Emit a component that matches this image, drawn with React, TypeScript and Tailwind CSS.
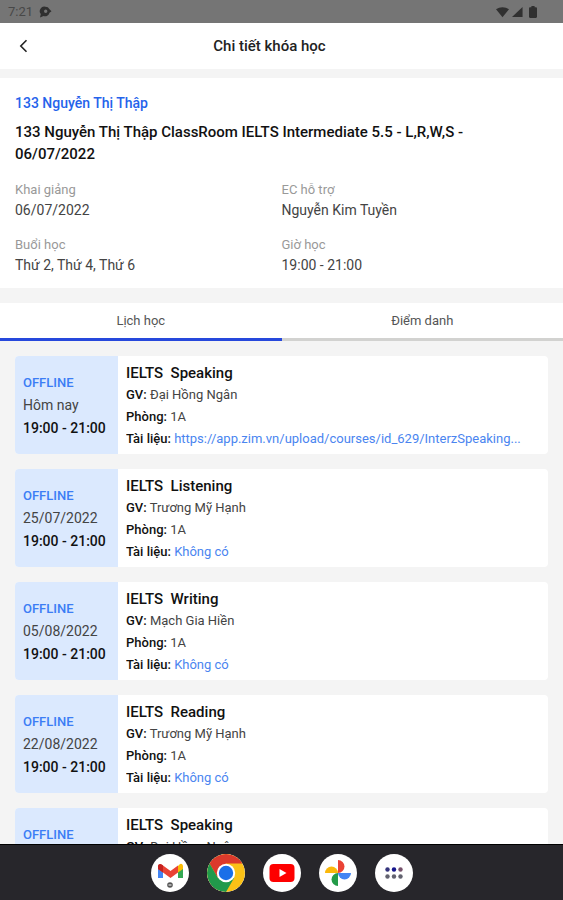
type Lesson = {
  skill: string;
  date: string;
  teacher: string;
  room: string;
  material?: string;
};

const lessons: Lesson[] = [
  {
    skill: "Speaking",
    date: "Hôm nay",
    teacher: "Đại Hồng Ngân",
    room: "1A",
    material: "https://app.zim.vn/upload/courses/id_629/InterzSpeaking...",
  },
  { skill: "Listening", date: "25/07/2022", teacher: "Trương Mỹ Hạnh", room: "1A" },
  { skill: "Writing", date: "05/08/2022", teacher: "Mạch Gia Hiền", room: "1A" },
  { skill: "Reading", date: "22/08/2022", teacher: "Trương Mỹ Hạnh", room: "1A" },
  { skill: "Speaking", date: "24/08/2022", teacher: "Đại Hồng Ngân", room: "1A" },
];

const facts = [
  ["Khai giảng", "06/07/2022"],
  ["EC hỗ trợ", "Nguyễn Kim Tuyền"],
  ["Buổi học", "Thứ 2, Thứ 4, Thứ 6"],
  ["Giờ học", "19:00 - 21:00"],
];

function StatusBar() {
  return (
    <div className="flex h-[23px] shrink-0 items-center justify-between bg-[#757575] pr-[26px] pl-2 text-[#303030]">
      <div className="flex items-center gap-[6px]">
        <span className="text-[13px] leading-5 text-[#484848]">7:21</span>
        <svg className="h-3 w-[13px]" viewBox="0 0 13 12" fill="currentColor" aria-hidden="true">
          <path
            fillRule="evenodd"
            d="M6.500 .8a4.500 4.500 0 0 1 4 2.400L12.500 5.200l-2 1.500a4.500 4.500 0 0 1-6 3.300L1 11.500l.8-3.500A4.500 4.500 0 0 1 6.500 .8zM6.700 3.600a1.700 1.700 0 1 0 0 3.400 1.700 1.700 0 0 0 0-3.400z"
          />
        </svg>
      </div>
      <div className="flex items-center gap-[3px]">
        <svg className="h-3 w-[13px]" viewBox="0 0 14 12" fill="currentColor" aria-hidden="true">
          <path d="M0 3C4 .1 10 .1 14 3L7 11.6z" />
        </svg>
        <svg className="h-3 w-[11px]" viewBox="0 0 12 12" fill="currentColor" aria-hidden="true">
          <path d="M11.5 .5v11H0z" />
        </svg>
        <svg className="ml-[3px] h-3 w-2" viewBox="0 0 8 12" fill="currentColor" aria-hidden="true">
          <path d="M2.4 0h3.2v1.3h1.2c.7 0 1.2.5 1.2 1.2v8.300c0 .7-.5 1.200-1.200 1.200H1.200C.5 12 0 11.500 0 10.800V2.500c0-.7.5-1.200 1.200-1.200h1.200z" />
        </svg>
      </div>
    </div>
  );
}

function LessonCard({ lesson }: { lesson: Lesson }) {
  return (
    <li className="flex overflow-hidden rounded bg-white">
      <div className="flex w-[103px] shrink-0 flex-col justify-center bg-[#dbe9fe] pl-2 text-[14px] leading-[23px]">
        <p className="text-[13px] leading-[23px] font-medium text-[#3b7df5]">OFFLINE</p>
        <p className="text-[#444444]">{lesson.date}</p>
        <p className="font-medium text-[#111111]">19:00 - 21:00</p>
      </div>
      <div className="min-w-0 flex-1 pt-[6px] pr-3 pb-1 pl-2 text-[13px] leading-[22px] text-[#444444]">
        <h2 className="text-[15px] leading-[22px] font-medium whitespace-pre text-[#111111]">
          {"IELTS  " + lesson.skill}
        </h2>
        <p>
          <span className="font-medium text-[#111111]">GV:</span> {lesson.teacher}
        </p>
        <p>
          <span className="font-medium text-[#111111]">Phòng:</span> {lesson.room}
        </p>
        <p className="truncate">
          <span className="font-medium text-[#111111]">Tài liệu:</span>{" "}
          {lesson.material ? (
            <a href="#material" className="text-[#4a85f0]">
              {lesson.material}
            </a>
          ) : (
            <span className="text-[#4a85f0]">Không có</span>
          )}
        </p>
      </div>
    </li>
  );
}

const appButton = "flex size-[38px] items-center justify-center overflow-hidden rounded-full bg-white";

function Dock() {
  return (
    <nav className="flex h-14 shrink-0 items-center justify-center gap-[18px] border-t border-black bg-[#27262b]">
      <button type="button" aria-label="Gmail" className={appButton}>
        <svg className="size-[38px]" viewBox="0 0 38 38" aria-hidden="true">
          <path d="M7 13v11h5V15z" fill="#4285f4" />
          <path d="M27 15v9h5V13z" fill="#34a853" />
          <path d="M27 12v6.500L32 15v-2.500c0-2.500-2-3.500-3.500-2z" fill="#fbbc04" />
          <path d="M7 13c0-3 2.300-3.500 4-2.200l8.500 6.200L27 11.400V18.500l-7.500 5.500L12 18.500 7 15z" fill="#ea4335" />
          <path d="M7 12.500V15l5 3.500V11.600L11 10.800C9.300 9.500 7 10 7 12.500z" fill="#c5221f" />
          <circle cx="19" cy="31" r="2.800" fill="#555" />
          <path d="M17.500 30h3v2h-3z" fill="#aaa" />
        </svg>
      </button>
      <button type="button" aria-label="Chrome" className={appButton}>
        <svg className="size-[38px]" viewBox="0 0 38 38" aria-hidden="true">
          <circle cx="19" cy="19" r="19" fill="#fbc116" />
          <path d="M2.550 9.500A19 19 0 0 1 35.450 9.500H19L10.800 23.700z" fill="#dc3a2c" />
          <path d="M2.550 9.500A19 19 0 0 0 19 38L27.200 23.700H10.800z" fill="#219a4b" />
          <circle cx="19" cy="19" r="9.200" fill="#fff" />
          <circle cx="19" cy="19" r="7.200" fill="#1a6fe8" />
        </svg>
      </button>
      <button type="button" aria-label="YouTube" className={appButton}>
        <svg className="size-[38px]" viewBox="0 0 38 38" aria-hidden="true">
          <rect x="6.500" y="10" width="25" height="18" rx="4" fill="#fe0000" />
          <path d="M16.500 15v8l7-4z" fill="#fff" />
        </svg>
      </button>
      <button type="button" aria-label="Google Photos" className={appButton}>
        <svg className="size-[38px]" viewBox="0 0 38 38" aria-hidden="true">
          <path d="M19 6a6.500 6.500 0 0 1 0 13z" fill="#ea4335" />
          <path d="M32 19a6.500 6.500 0 0 1-13 0z" fill="#4285f4" />
          <path d="M19 32a6.500 6.500 0 0 1 0-13z" fill="#249b48" />
          <path d="M6 19a6.500 6.500 0 0 1 13 0z" fill="#fbb80a" />
        </svg>
      </button>
      <button type="button" aria-label="Tất cả ứng dụng" className={appButton}>
        <svg className="size-[38px]" viewBox="0 0 38 38" aria-hidden="true">
          <circle cx="12.500" cy="15.500" r="2.200" fill="#34347c" />
          <circle cx="19" cy="15.500" r="2.200" fill="#16168c" />
          <circle cx="25.500" cy="15.500" r="2.200" fill="#77526c" />
          <circle cx="12.500" cy="22.500" r="2.200" fill="#62626f" />
          <circle cx="19" cy="22.500" r="2.200" fill="#62626f" />
          <circle cx="25.500" cy="22.500" r="2.200" fill="#62626f" />
        </svg>
      </button>
    </nav>
  );
}

export default function App() {
  return (
    <div className="flex h-screen flex-col bg-[#f4f4f4] font-['Roboto','Noto_Sans',sans-serif]">
      <StatusBar />
      <header className="flex h-[46px] shrink-0 items-center bg-white">
        <button type="button" aria-label="Quay lại" className="flex w-12 justify-center">
          <svg className="size-4" viewBox="0 0 16 16" fill="none" aria-hidden="true">
            <path d="M10.500 2.200L4.800 8l5.700 5.800" stroke="#222" strokeWidth="1.600" />
          </svg>
        </button>
        <h1 className="flex-1 pr-18 text-center text-[15px] leading-[22px] font-medium text-[#222222]">
          Chi tiết khóa học
        </h1>
      </header>
      <main className="min-h-0 flex-1 overflow-hidden pt-[9px]">
        <section className="bg-white px-[15px] pt-[15px] pb-[13px]">
          <p className="text-[14px] leading-5 font-medium text-[#2563eb]">133 Nguyễn Thị Thập</p>
          <p className="mt-2 pr-4 text-[15px] leading-[22px] font-medium text-[#111111]">
            133 Nguyễn Thị Thập ClassRoom IELTS Intermediate 5.5 - L,R,W,S - 06/07/2022
          </p>
          <dl className="mt-[15px] grid grid-cols-2 gap-y-[15px] text-[14px] leading-5">
            {facts.map(([label, value]) => (
              <div key={label}>
                <dt className="text-[13px] leading-5 text-[#999999]">{label}</dt>
                <dd className="text-[#444444]">{value}</dd>
              </div>
            ))}
          </dl>
        </section>
        <div role="tablist" className="mt-[15px] grid grid-cols-2 bg-white text-[13px] leading-5 text-[#555555]">
          <button type="button" role="tab" aria-selected="true" className="border-b-3 border-[#2648dc] pt-2 pb-[7px]">
            Lịch học
          </button>
          <button type="button" role="tab" aria-selected="false" className="border-b-3 border-[#d2d2d0] pt-2 pb-[7px]">
            Điểm danh
          </button>
        </div>
        <ul className="flex flex-col gap-[15px] px-[15px] pt-[15px]">
          {lessons.map((lesson) => (
            <LessonCard key={lesson.date} lesson={lesson} />
          ))}
        </ul>
      </main>
      <Dock />
    </div>
  );
}
